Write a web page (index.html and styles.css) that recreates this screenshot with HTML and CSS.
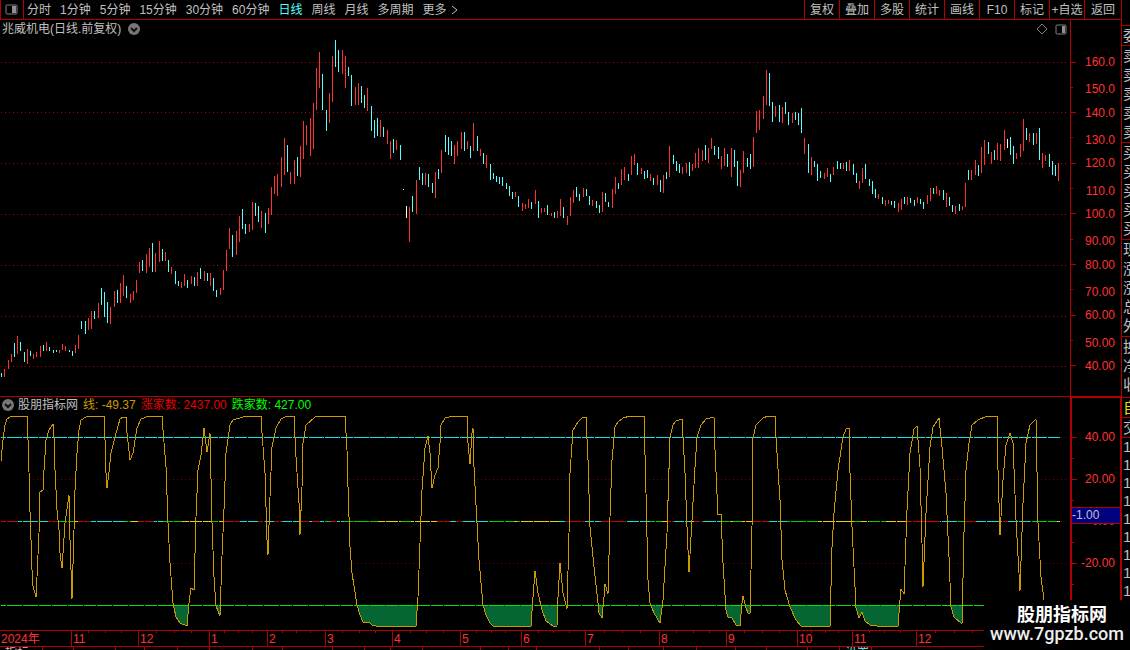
FILE: index.html
```html
<!DOCTYPE html>
<html lang="zh-CN">
  <head>
    <meta charset="utf-8">
    <title>兆威机电 日线</title>
    <link rel="stylesheet" href="styles.css">
  </head>
  <body>
    <div class="workspace">
      <!-- Period toolbar -->
      <nav class="toolbar">
        <button class="layout-btn" aria-label="布局">
          <svg width="13" height="11" viewBox="0 0 13 11"><rect x="1" y="1" width="11" height="9" rx="1" fill="none" stroke="#808080"/><rect x="7" y="2" width="4" height="7" fill="#909090"/></svg>
        </button>
        <div class="periods">
          <button>分时</button>
          <button>1分钟</button>
          <button>5分钟</button>
          <button>15分钟</button>
          <button>30分钟</button>
          <button>60分钟</button>
          <button class="active">日线</button>
          <button>周线</button>
          <button>月线</button>
          <button>多周期</button>
          <button class="more">更多
            <svg width="7" height="10" viewBox="0 0 7 10"><path d="M1 1L6 5L1 9" fill="none" stroke="#c0c0c0"/></svg>
          </button>
        </div>
        <div class="tools">
          <button>复权</button>
          <button>叠加</button>
          <button>多股</button>
          <button>统计</button>
          <button>画线</button>
          <button>F10</button>
          <button>标记</button>
          <button>+自选</button>
          <button>返回</button>
        </div>
      </nav>

      <!-- Price chart -->
      <section class="pane price">
        <div class="chart">
          <header class="price-head">
            <h1>兆威机电(日线.前复权)</h1>
            <button class="round" aria-label="展开">
              <svg width="12" height="12" viewBox="0 0 12 12"><circle cx="6" cy="6" r="6" fill="#777"/><path d="M3 5L6 8L9 5" fill="none" stroke="#111" stroke-width="2"/></svg>
            </button>
            <div class="pane-icons">
              <svg width="11" height="11" viewBox="0 0 11 11"><path d="M5 0L10 5L5 10L0 5Z" fill="none" stroke="#808080" shape-rendering="crispEdges"/></svg>
              <svg width="12" height="11" viewBox="0 0 12 11"><rect x="1" y="1" width="10" height="9" rx="1" fill="none" stroke="#808080"/><rect x="7" y="2" width="3" height="7" fill="#909090"/></svg>
            </div>
          </header>
          <svg class="plot" id="price-plot" viewBox="0 38 1070 358" preserveAspectRatio="none">
            <path id="price-grid" class="grid-dots"/>
            <path id="bars-up" class="bar-up"/>
            <path id="bars-down" class="bar-down"/>
            <path id="bars-flat" class="bar-flat"/>
          </svg>
        </div>
        <div class="axis">
          <div class="tick">160.0</div>
          <div class="tick minor">150.0</div>
          <div class="tick">140.0</div>
          <div class="tick minor">130.0</div>
          <div class="tick">120.0</div>
          <div class="tick minor">110.0</div>
          <div class="tick">100.0</div>
          <div class="tick minor">90.00</div>
          <div class="tick">80.00</div>
          <div class="tick minor">70.00</div>
          <div class="tick">60.00</div>
          <div class="tick minor">50.00</div>
          <div class="tick">40.00</div>
        </div>
      </section>

      <!-- Indicator chart -->
      <section class="pane indicator">
        <div class="chart">
          <header class="ind-head">
            <button class="round" aria-label="指标">
              <svg width="12" height="12" viewBox="0 0 12 12"><circle cx="6" cy="6" r="6" fill="#777"/><path d="M3 5L6 8L9 5" fill="none" stroke="#111" stroke-width="2"/></svg>
            </button>
            <span>股朋指标网</span>
            <span class="gold">线: -49.37</span>
            <span class="red">涨家数: 2437.00</span>
            <span class="green">跌家数: 427.00</span>
          </header>
          <svg class="plot" id="ind-plot" viewBox="0 413 1070 217" preserveAspectRatio="none">
            <defs>
              <clipPath id="below"><rect x="0" y="605" width="1070" height="25"/></clipPath>
            </defs>
            <path id="ind-grid" class="grid-dots dim"/>
            <path id="ind-mask" fill="#000"/>
            <path id="ind-fill" fill="#066633" clip-path="url(#below)"/>
            <path id="level-high" fill="#14e6e6"/>
            <g id="level-zero"></g>
            <path id="level-low" fill="#00e600"/>
            <polyline id="ind-line" class="ind-line"/>
          </svg>
        </div>
        <div class="axis">
          <div class="tick">40.00</div>
          <div class="tick minor"></div>
          <div class="tick">20.00</div>
          <div class="tick minor"></div>
          <div class="tick">0.00</div>
          <div class="tick minor"></div>
          <div class="tick">-20.00</div>
          <div class="tick minor"></div>
          <div class="tick"></div>
          <div class="cursor-value">-1.00</div>
        </div>
      </section>

      <!-- Month scale -->
      <div class="dates">
        <span>2024年</span>
        <span>11</span>
        <span>12</span>
        <span>1</span>
        <span>2</span>
        <span>3</span>
        <span>4</span>
        <span>5</span>
        <span>6</span>
        <span>7</span>
        <span>8</span>
        <span>9</span>
        <span>10</span>
        <span>11</span>
        <span>12</span>
      </div>

      <div class="tabs">
        <span>指标</span><span></span><span></span><span></span><span></span><span></span><span></span><span></span>
        <span></span><span></span><span></span><span></span><span></span><span></span><span></span><span></span>
        <span></span><span></span><span></span><span></span><span></span><span></span><span></span><span class="cyan">设置</span>
      </div>
    </div>

    <!-- Quote column, cut by the window edge -->
    <aside class="quote">
      <div class="group head"><span>委</span></div>
      <div class="group"><span>卖</span><span>卖</span><span>卖</span><span>卖</span><span>卖</span></div>
      <div class="group"><span>买</span><span>买</span><span>买</span><span>买</span><span>买</span></div>
      <div class="group"><span>现</span><span>涨</span><span>涨</span><span>总</span><span>外</span></div>
      <div class="group"><span>换</span><span>净</span><span>收</span></div>
      <div class="group yellow"><span>自</span></div>
      <div class="group"><span>交</span></div>
      <div class="group trades"><span>1</span><span>1</span><span>1</span><span>1</span><span>1</span><span>1</span><span>1</span><span>1</span><span>1</span></div>
    </aside>

    <div class="site">
      <strong>股朋指标网</strong>
      <span>www.7gpzb.com</span>
    </div>

    <script src="chart.js"></script>
  </body>
</html>
```
FILE: styles.css
```css
* {
  box-sizing: border-box;
}

body {
  margin: 0;
  min-height: 100vh;
  display: flex;
  position: relative;
  overflow: hidden;
  background-color: #000;
  color: #c0c0c0;
  font-family: "Liberation Sans", "Noto Sans CJK SC", sans-serif;
  font-size: 12px;
  line-height: 16px;
}

button {
  background: none;
  border: none;
  padding: 0;
  color: inherit;
  font: inherit;
  white-space: nowrap;
}

svg {
  display: block;
}

.workspace {
  flex: 1;
  min-width: 0;
  display: flex;
  flex-direction: column;
}

/* toolbar */
.toolbar {
  display: flex;
  height: 20px;
  border-bottom: 1px solid #b00000;
}

.layout-btn {
  width: 24px;
  padding-left: 4px;
  border-left: 1px solid #b00000;
  border-right: 1px solid #b00000;
}

.periods {
  flex: 1;
  display: flex;
  gap: 9px;
  padding-left: 3px;
}

.more {
  display: flex;
  align-items: center;
  gap: 4px;
}

.active,
.cyan {
  color: #54ffff;
}

.tools {
  display: flex;
}

.tools button {
  width: 35px;
  border-left: 1px solid #b00000;
}

.tools button:last-child {
  width: 37px;
}

/* panes */
.pane {
  display: flex;
  border-bottom: 1px solid #b00000;
}

.price {
  flex: 1;
}

.indicator {
  height: 234px;
}

.chart {
  flex: 1;
  min-width: 0;
  display: flex;
  flex-direction: column;
}

.price-head {
  display: flex;
  align-items: center;
  gap: 7px;
  height: 18px;
  padding: 0 3px 0 2px;
}

.price-head h1 {
  margin: 0;
  font-size: 12px;
  font-weight: normal;
}

.pane-icons {
  display: flex;
  gap: 7px;
  margin-left: auto;
}

.ind-head {
  display: flex;
  align-items: center;
  gap: 5px;
  height: 16px;
  padding-left: 2px;
}

.round + span {
  margin-left: -1px;
}

.gold {
  color: #cc9900;
}

.red {
  color: #e60000;
}

.green {
  color: #00ff00;
}

.plot {
  flex: 1;
  width: 100%;
  min-height: 0;
  shape-rendering: crispEdges;
}

.grid-dots {
  fill: #b00000;
}

.dim {
  fill: #800000;
}

.bar-up {
  fill: #ff3232;
}

.bar-down {
  fill: #54ffff;
}

.bar-flat {
  fill: #fff;
}

.ind-line {
  fill: none;
  stroke: #cc9900;
}

/* value axis */
.axis {
  position: relative;
  width: 51px;
  display: flex;
  flex-direction: column;
  justify-content: space-between;
  padding: 36px 6px 24px 0;
  border-left: 1px solid #b00000;
  color: #ff3232;
}

.indicator .axis {
  padding: 33px 5px 19px 0;
  border: 1px solid #b00000;
  border-bottom: none;
  border-left-width: 2px;
}

.tick {
  display: flex;
  align-items: center;
  justify-content: space-between;
  height: 12px;
}

.tick::before {
  content: "";
  width: 5px;
  height: 1px;
  background-color: #b00000;
}

.minor {
  align-items: flex-start;
}

.minor::before {
  width: 2px;
  align-self: center;
}

.cursor-value {
  position: absolute;
  top: 109px;
  left: 0;
  right: 0;
  background-color: #000080;
  border-top: 1px solid #b00000;
  border-bottom: 1px solid #b00000;
  color: #c0c0c0;
  line-height: 15px;
}

/* month scale */
.dates {
  display: grid;
  grid-template-columns: 71fr 67fr 71fr 58fr 58fr 67fr 68fr 61fr 64fr 74fr 67fr 71fr 55fr 64fr 205fr;
  height: 16px;
  border-bottom: 1px solid #b00000;
  color: #ff3232;
}

.dates span {
  padding-left: 1px;
  border-left: 1px solid #b00000;
  background-image: linear-gradient(#b00000, #b00000), linear-gradient(#b00000, #b00000), linear-gradient(#b00000, #b00000);
  background-size: 1px 2px;
  background-repeat: no-repeat;
  background-position: 25% 0, 50% 0, 75% 0;
}

.dates span:first-child {
  border-left: none;
  background-image: none;
}

.dates span:last-child {
  background-position: 9% 0, 18% 0, 27% 0;
}

.tabs {
  display: grid;
  grid-template-columns: 43fr 31fr 42fr 29fr 33fr 32fr 43fr 30fr 50fr 32fr 26fr 32fr 58fr 28fr 28fr 63fr 29fr 35fr 33fr 39fr 31fr 41fr 32fr 32fr 249fr;
  height: 3px;
  overflow: hidden;
}

.tabs span {
  padding-left: 5px;
  border-right: 1px solid #b00000;
  line-height: 12px;
}

/* quote column */
.quote {
  width: 9px;
  padding-top: 25px;
  overflow: hidden;
  border-left: 1px solid #b00000;
  font-size: 15px;
}

.group {
  border-top: 1px solid #b00000;
  padding-left: 1px;
}

.group span {
  display: block;
  height: 19px;
  line-height: 19px;
}

.group:nth-child(2),
.group:nth-child(3),
.group:nth-child(4) {
  padding-bottom: 1px;
}

.group:nth-child(5) {
  padding-bottom: 3px;
}

.yellow {
  color: #e0e000;
}

.trades span {
  height: 18px;
  line-height: 18px;
}

/* site mark in the corner */
.site {
  position: absolute;
  right: 0;
  bottom: 0;
  width: 146px;
  height: 50px;
  padding-top: 5px;
  display: flex;
  flex-direction: column;
  align-items: center;
  background-color: #000;
  color: #fff;
  font-family: Roboto, "Noto Sans CJK SC", sans-serif;
  font-size: 18px;
  line-height: 19px;
}

.site strong {
  padding-left: 10px;
}

.site span {
  font-weight: 500;
  color: #eee;
}
```
FILE: chart.js
```js
// x, top, bottom of every daily bar; the letter is r (up), c (down) or w (flat)
var bars = `
1c373-377 4r369-377 8r360-369 11r354-362 14c343-357 17r336-354 20c342-351 24c352-362
27r349-364 30c351-356 33r354-359 36r352-357 40r346-357 43c345-351 46r342-351 49c347-351
53c350-353 56c350-352 59r350-353 62r344-350 65r346-351 69c350-352 72c351-356 75r345-353
78r335-349 81c321-329 85c321-334 88r318-330 91r311-329 94c311-319 98r303-318 101c288-305
104c292-317 107c302-323 110r307-324 114r291-307 117c290-303 120r283-303 123r275-296 126c286-298
130r294-303 133r291-300 136r280-293 139r262-273 142c260-271 146r254-273 149r248-267 152c243-272
155r253-272 159r241-262 162c249-261 165r252-261 168c260-272 171r267-274 175c271-284 178c281-286
181r282-288 184r274-286 187c280-288 191r276-284 194c277-286 197r272-286 200c268-279 204r271-281
207c273-281 210r273-286 213c278-291 216c290-297 220r288-295 223r270-290 226r250-271 229r228-249
232c235-257 236r231-255 239r216-242 242c209-229 245c224-234 249r224-232 252r202-230 255c203-216
258c206-222 261r211-228 265c213-233 268r208-224 271r187-215 274r176-194 277r174-196 281r157-187
284r138-175 287c145-172 290r172-184 294r160-184 297c157-176 300r146-177 303r121-159 306r125-145
310r118-156 313r103-149 316r68-110 319r52-88 322c74-110 326c110-131 329r93-123 332r56-102
335c40-67 338c50-72 342r50-74 345r56-88 348c67-76 351c75-106 355r87-105 358r83-105
361c86-103 364c95-108 367r88-111 371c106-131 374c120-138 377c118-136 380r120-137 383c127-137
387r130-144 390r141-159 393c139-153 396r140-150 400c145-160 403w189-190 406w206-218 409r207-242
412c196-212 416r180-214 419c167-180 422c173-185 425r173-185 428c174-187 432c183-193 435r172-198
438c169-179 441r150-173 445c135-152 448c137-155 451c141-156 454r145-164 457r141-156 461r132-149
464c132-151 467r141-149 470c146-158 473r123-151 477c136-151 480r149-156 483c153-164 486r155-168
490c164-180 493c173-179 496c176-182 499c177-184 502c177-186 506c183-189 509c186-196 512c192-199
515r192-197 518c196-207 522r203-211 525r204-209 528r199-208 531c202-209 535r190-204 538c201-218
541r208-213 544r208-212 547c205-215 551r213-216 554c212-218 557r211-218 560r199-216 563c207-218
567r216-225 570r197-216 573r190-203 576c187-197 579c194-201 583r188-197 586c189-196 589c196-205
592r200-206 596c201-208 599c205-213 602r192-212 605c193-202 608c202-207 612r189-208 615r177-194
618c183-189 621r169-185 624r167-180 628c174-181 631r156-175 634r154-165 637c163-175 641r168-174
644c171-179 647c170-178 650r174-181 653c178-185 657r175-185 660c180-192 663r175-193 666c172-179
669r146-177 673c155-164 676c161-171 679c164-173 682r167-174 686r163-173 689c162-176 692r164-171
695r153-168 698r148-168 702r150-161 705c145-160 708r148-163 711r138-149 714c146-155 718c147-159
721r156-169 724r148-166 727c154-167 731r148-177 734c150-167 737c161-186 740r170-187 743r151-173
747c158-167 750c154-169 753r137-167 756r111-133 759r110-130 763r96-119 766r70-105 769c73-106
772c102-122 775r106-117 779c105-122 782r107-123 785c102-114 788c112-125 792r113-123 795c112-120
798c113-125 801c108-133 804r138-154 808c144-173 811r157-175 814c161-167 817c164-181 820c171-178
824r173-179 827r168-177 830c174-182 833r167-175 837c161-169 840c163-169 843r163-169 846c162-171
849r160-171 853c164-175 856c173-183 859r181-189 862r168-183 865c164-179 869c179-186 872c181-194
875c189-198 878r194-199 882c197-204 885r200-206 888r200-204 891c201-205 894c201-208 898r203-212
901r199-210 904c197-204 907r197-205 910c198-203 914c200-206 917r197-203 920c199-204 923c202-209
927r195-204 930r188-201 933c188-194 936r186-194 939r190-196 943c190-200 946r193-207 949c197-206
952c205-212 955r206-214 959c204-211 962r206-210 965r183-207 968c170-180 971r170-180 975r160-175
978c165-176 981r147-173 984r140-165 988c142-154 991r152-164 994c150-160 997r143-160 1000r144-161
1004r130-150 1007w139-148 1010c137-155 1013c146-164 1016r153-159 1020r144-157 1023r119-151 1026c128-140
1029r133-142 1033c133-145 1036r133-144 1039c128-160 1042r153-168 1045r155-161 1049c154-167 1052c161-175
1055c165-176 1058r163-181`;

var line = `
1,461 3,440 5,425 7,419 10,417 13,416 27,416 28,440 29,472 30,512 31,540 32,570 33,586 36,597
37,577 39,533 40,492 43,490 44,470 46,440 49,430 53,424 54,437 55,470 57,510 59,530 60,553 62,568
65,523 69,495 70,540 72,599 74,530 75,490 77,453 79,430 81,420 86,417 90,416 104,416 105,440
106,473 107,488 109,472 111,453 115,437 120,419 123,417 126,417 127,433 130,460 133,453 137,428
141,419 149,416 162,416 163,430 166,467 168,523 170,563 173,603 176,617 180,623 187,626 189,603
191,588 194,590 196,517 198,470 201,455 204,428 207,452 210,433 212,523 214,577 216,606 220,616
222,556 224,510 226,453 230,425 233,420 243,417 252,416 261,416 262,433 265,473 267,540 268,555
270,497 272,447 276,428 281,419 285,417 294,416 296,457 299,503 300,535 302,487 303,443 306,425
315,417 318,416 345,416 347,450 348,487 350,547 352,573 357,605 360,615 363,622 369,622 372,625
376,626 416,626 418,597 420,543 422,490 425,448 428,436 430,453 432,488 435,475 438,468 440,443
441,425 445,418 453,416 467,416 468,443 470,464 472,433 473,428 474,467 477,523 479,560 483,605
486,615 490,623 493,626 501,626 531,626 533,597 535,571 538,593 542,610 546,621 553,626 557,626
558,597 560,563 563,593 567,609 569,533 570,473 573,430 578,422 583,417 586,417 588,460 590,527
594,567 598,603 599,613 602,618 604,597 605,584 608,594 610,517 612,460 615,427 618,422 623,418
630,416 644,416 646,493 648,580 650,603 654,613 660,623 663,600 667,533 670,437 673,425 676,421
682,419 685,473 687,527 689,572 692,520 695,467 697,437 701,425 706,419 714,417 715,450 718,515
721,514 723,563 726,610 728,617 732,618 736,625 740,626 742,603 743,596 746,608 748,613 750,613
752,527 753,438 756,425 763,418 768,416 775,416 776,437 780,500 782,560 785,590 790,607 796,620
801,626 808,626 830,626 832,547 834,513 838,470 843,437 846,429 849,428 850,473 852,527 855,587
856,608 859,618 862,612 865,621 870,625 877,626 898,626 900,600 901,589 904,594 907,510 910,453
914,429 917,426 920,467 922,543 923,587 926,513 930,447 933,427 939,418 942,447 946,493 949,557
951,607 954,617 962,624 964,533 966,470 969,443 972,425 978,420 987,416 997,416 998,470 1000,535
1003,480 1006,445 1010,433 1013,443 1016,520 1020,591 1023,503 1026,443 1030,425 1036,419 1038,523
1041,577 1044,600`.trim();

// colour and right end of each run on the zero line
var zero = `r18 c48 r58 g74 y78 r91 c125 g131 y138 r154 c163 g182 y212 g218 y224 r240 c258 r265 c274
r282 c299 r309 c312 r320 c324 g331 r337 c344 g378 y401 g411 y437 r450 c456 r463 c488 g514 y517 g520
y559 c565 r585 c601 r626 c650 g662 y668 r674 c690 y694 r703 c721 g729 y733 g742 y752 r769 c787 g818
y854 g861 y869 g886 y906 r940 c957 g964 r976 c1003 r1008 c1030 g1057 y1060`;
var colors = { r: "#cc0000", c: "#14dce6", g: "#00d200", y: "#f0d200" };

function setPath(id, d) {
  document.getElementById(id).setAttribute("d", d);
}

function dots(rows) {
  var d = "";
  for (var y of rows) {
    for (var x = 1; x < 1068; x += 4) {
      d += "M" + x + " " + y + "h1v1h-1z";
    }
  }
  return d;
}

// price bars
var paths = { r: "", c: "", w: "" };
var xs = [];
for (var bar of bars.trim().split(/\s+/)) {
  var m = bar.match(/(\d+)([rcw])(\d+)-(\d+)/);
  xs.push(+m[1]);
  paths[m[2]] += "M" + m[1] + " " + m[3] + "h1V" + m[4] + "h-1z";
}
setPath("price-grid", dots([62, 112, 163, 214, 265, 316, 366]));
setPath("bars-up", paths.r);
setPath("bars-down", paths.c);
setPath("bars-flat", paths.w);

// level lines break where the bar spacing is one pixel wider
var pieces = [];
var start = 1;
for (var i = 1; i < xs.length; i++) {
  if (xs[i] - xs[i - 1] === 4) {
    pieces.push([start, xs[i] - 2]);
    start = xs[i] - 1;
  }
}
pieces.push([start, 1060]);

function level(y, from, to) {
  var d = "";
  for (var p of pieces) {
    var a = Math.max(p[0], from);
    var b = Math.min(p[1], to);
    if (b > a) {
      d += "M" + a + " " + y + "H" + b + "v1H" + a + "z";
    }
  }
  return d;
}

setPath("level-high", level(437, 1, 1060));
setPath("level-low", level(605, 1, 1060));

var from = 1;
for (var run of zero.split(/\s+/)) {
  var to = +run.slice(1);
  var path = document.createElementNS("http://www.w3.org/2000/svg", "path");
  path.setAttribute("d", level(521, from, to));
  path.setAttribute("fill", colors[run[0]]);
  document.getElementById("level-zero").appendChild(path);
  from = to;
}

// indicator
setPath("ind-grid", dots([437, 479, 521, 563, 605]));
setPath("ind-mask", "M1 630L" + line + " 1044 630z");
setPath("ind-fill", "M1 413L" + line + " 1044 413z");
document.getElementById("ind-line").setAttribute("points", line);
```
